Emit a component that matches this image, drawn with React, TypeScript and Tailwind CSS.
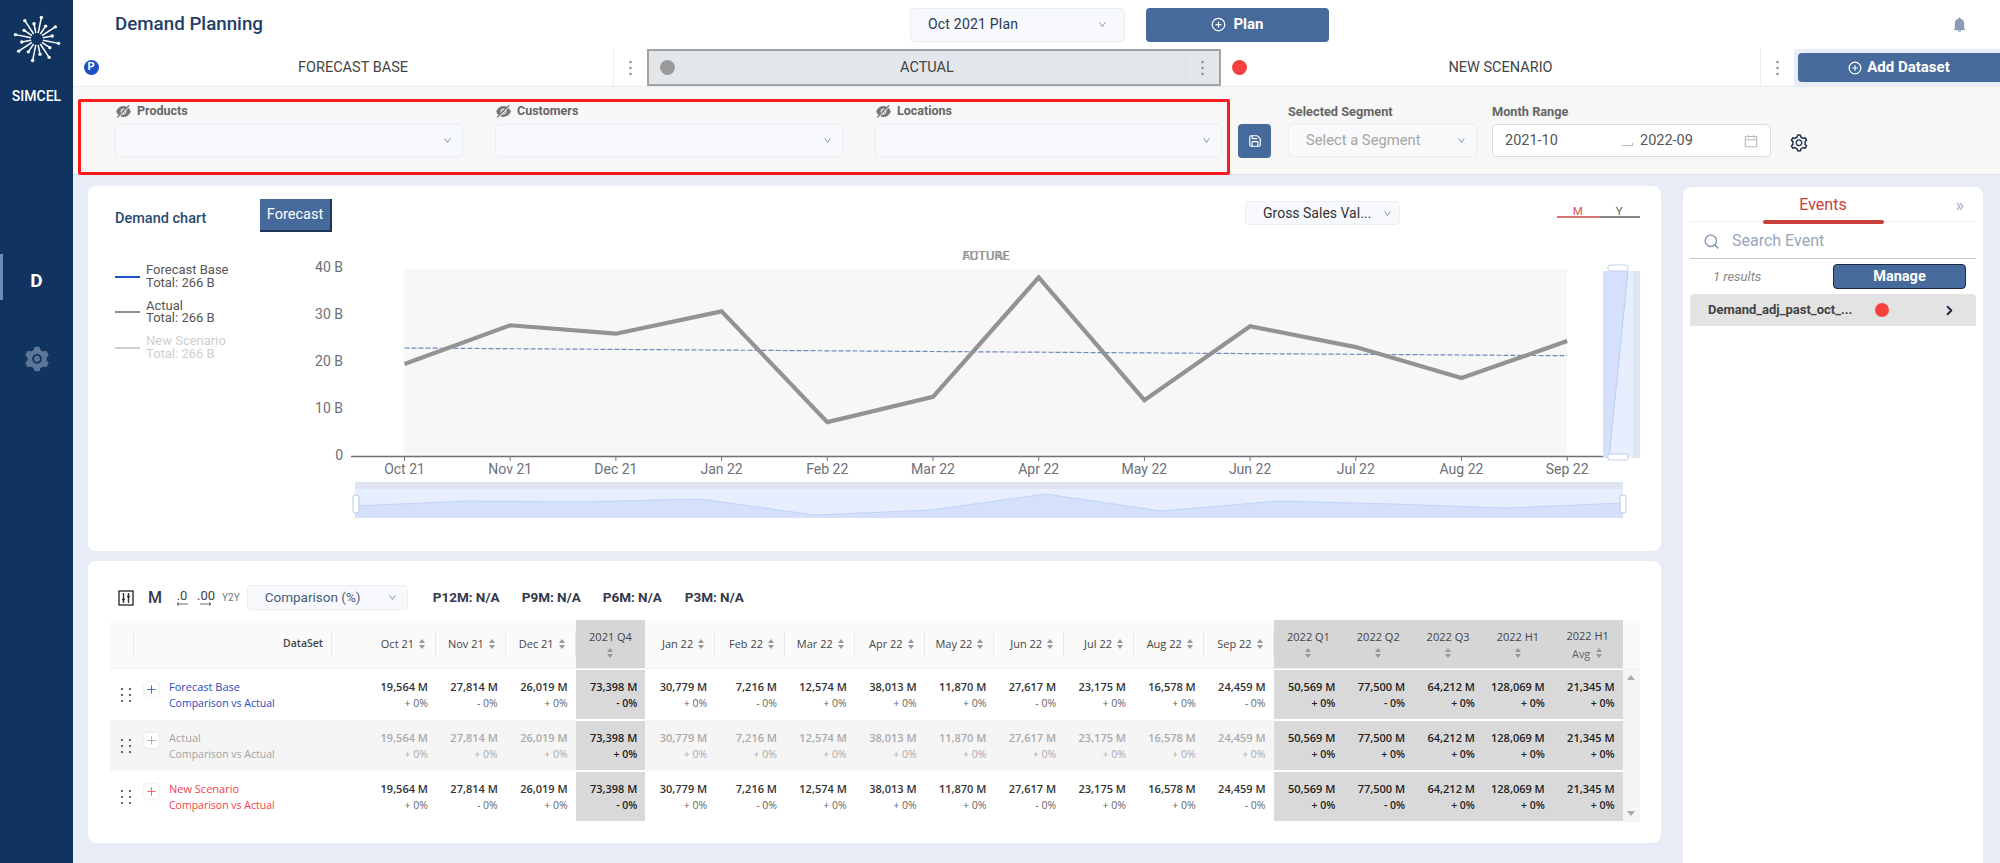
import { AiFillBell, AiFillEyeInvisible, AiOutlineCalendar, AiOutlineDown, AiOutlineSetting, AiFillSetting } from "react-icons/ai"
import { CirclePlus, Save, Search, ChevronRight, Plus } from "lucide-react"

const SANS = "font-['Roboto',_'Liberation_Sans',_sans-serif]"
const TABLE = "font-['Open_Sans',_'Liberation_Sans',_sans-serif]"

const values = [19564, 27814, 26019, 73398, 30779, 7216, 12574, 38013, 11870, 27617, 23175, 16578, 24459, 50569, 77500, 64212, 128069, 21345]
const heads = ["Oct 21", "Nov 21", "Dec 21", "2021 Q4", "Jan 22", "Feb 22", "Mar 22", "Apr 22", "May 22", "Jun 22", "Jul 22", "Aug 22", "Sep 22", "2022 Q1", "2022 Q2", "2022 Q3", "2022 H1", "2022 H1"]
const signs = "+-+-+-+++-++-+-+++"
const shaded = (i: number) => i === 3 || i >= 13

const monthly = [19.564, 27.814, 26.019, 30.779, 7.216, 12.574, 38.013, 11.87, 27.617, 23.175, 16.578, 24.459]
const months = ["Oct 21", "Nov 21", "Dec 21", "Jan 22", "Feb 22", "Mar 22", "Apr 22", "May 22", "Jun 22", "Jul 22", "Aug 22", "Sep 22"]
const xAt = (i: number) => 404.5 + i * 105.7
const yAt = (v: number) => 456 - v * 4.7

const Logo = () => {
  const rays = Array.from({ length: 16 }, (_, i) => {
    const a = (i * Math.PI) / 8 + 0.2
    const r = i % 2 ? 15.5 : 22
    return { x1: Math.cos(a) * 6, y1: Math.sin(a) * 6, x2: Math.cos(a) * r, y2: Math.sin(a) * r }
  })
  return (
    <svg width="50" height="50" viewBox="-25 -25 50 50">
      {rays.map((r, i) => (
        <g key={i}>
          <line x1={r.x1} y1={r.y1} x2={r.x2} y2={r.y2} stroke="white" strokeWidth="1.5" />
          <circle cx={r.x2} cy={r.y2} r="1.7" fill="white" />
        </g>
      ))}
    </svg>
  )
}

const Sort = ({ className = "" }: { className?: string }) => (
  <svg width="8" height="12" viewBox="0 0 8 12" className={className}>
    <path d="M4 1 7 5H1z" fill="#999" />
    <path d="M4 11 1 7h6z" fill="#999" />
  </svg>
)

const Dots = ({ className = "" }: { className?: string }) => (
  <svg width="3" height="16" viewBox="0 0 3 16" className={className}>
    <circle cx="1.5" cy="2" r="1.3" fill="#8392b5" />
    <circle cx="1.5" cy="8" r="1.3" fill="#8392b5" />
    <circle cx="1.5" cy="14" r="1.3" fill="#8392b5" />
  </svg>
)

const Grip = () => (
  <svg width="12" height="16" viewBox="0 0 12 16">
    {[2, 8, 14].map((y) => (
      <g key={y}>
        <circle cx="2" cy={y} r="1.1" fill="#444" />
        <circle cx="10" cy={y} r="1.1" fill="#444" />
      </g>
    ))}
  </svg>
)

const Decimal = ({ label, dir }: { label: string; dir: "left" | "right" }) => (
  <span className="flex flex-col items-center text-[13px] leading-[13px] text-[#444]">
    {label}
    <svg width="14" height="4" viewBox="0 0 14 4" fill="none" stroke="#444" strokeWidth="0.8">
      {dir === "left" ? <path d="M13 2H2M4 .5 2 2l2 1.5" /> : <path d="M1 2h11M10 .5 12 2l-2 1.5" />}
    </svg>
  </span>
)

const Tab = ({ label, dot, menuW, active }: { label: string; dot: React.ReactNode; menuW: string; active?: boolean }) => (
  <div className={`flex items-center ${menuW} ${active ? "bg-[#e3e6eb] border-2 border-[#a3a3a3] border-l-[#a3a3a3]" : ""}`}>
    <div className="w-[36px] flex justify-center shrink-0">{dot}</div>
    <div className="flex-1 text-center text-[14.5px] text-[#444] pr-[16px]">{label}</div>
    <div className={`w-[34px] h-full flex items-center justify-center border-l ${active ? "border-[#dcdfe5]" : "border-[#eceef2]"}`}>
      <Dots />
    </div>
  </div>
)

const Field = ({ label, w, className = "" }: { label: string; w: string; className?: string }) => (
  <div className={`${w} ${className}`}>
    <div className="flex items-center gap-[5px] h-[25px] text-[12.5px] font-bold text-[#666]">
      <AiFillEyeInvisible size={17} className="text-[#777]" />
      {label}
    </div>
    <div className="h-[33px] bg-[#f7f9fc] border border-[#e9edf5] rounded flex items-center justify-end pr-[10px]">
      <AiOutlineDown size={9} className="text-[#7c8aa8]" />
    </div>
  </div>
)

const legend = [
  { name: "Forecast Base", color: "bg-[#1f4fc4]", text: "text-[#555]" },
  { name: "Actual", color: "bg-[#8f8f8f]", text: "text-[#555]" },
  { name: "New Scenario", color: "bg-[#cfcfcf]", text: "text-[#cfcfcf]" },
]

const Chart = () => {
  const points = monthly.map((v, i) => `${xAt(i)},${yAt(v)}`).join(" ")
  const mini = "355,506 468,501 581,502 700,499 815,515 931,510 1046,494 1161,511 1278,501 1392,504 1507,508 1623,503"
  return (
    <svg width="1350" height="290" viewBox="300 240 1350 290" className="block shrink-0">
      <rect x="404.5" y="269" width="1162.5" height="187" fill="#f7f7f7" />
      <text x="986" y="260" textAnchor="middle" fontSize="13" fill="#888" fontFamily="Roboto">FUTURE</text>
      <text x="986" y="260" textAnchor="middle" fontSize="13" fill="#999" fontFamily="Roboto">ACTUAL</text>
      {["40 B", "30 B", "20 B", "10 B", "0"].map((t, i) => (
        <text key={t} x="343" y={272 + i * 47} textAnchor="end" fontSize="14" fill="#6e7079" fontFamily="Roboto">{t}</text>
      ))}
      <line x1="404.5" y1="348" x2="1567" y2="355.7" stroke="#7089bd" strokeWidth="1.2" strokeDasharray="5 2" />
      <polyline points={points} fill="none" stroke="#939393" strokeWidth="4.2" strokeLinejoin="miter" />
      <line x1="351" y1="456.5" x2="1603" y2="456.5" stroke="#6e7079" strokeWidth="1.5" />
      {months.map((m, i) => (
        <g key={m}>
          <line x1={xAt(i)} y1="456" x2={xAt(i)} y2="461" stroke="#6e7079" />
          <text x={xAt(i)} y="474" textAnchor="middle" fontSize="14" fill="#6e7079" fontFamily="Roboto">{m}</text>
        </g>
      ))}
      <rect x="1603" y="271" width="37" height="187" fill="#e7eefd" />
      <rect x="1633" y="271" width="7" height="187" fill="#dfe4f1" />
      <polygon points="1603,271 1628,271 1609,458 1603,458" fill="#d5e0fb" />
      <line x1="1628" y1="271" x2="1609" y2="458" stroke="#bccdf5" />
      <rect x="1608" y="265" width="20" height="6" rx="2" fill="white" stroke="#c3cfe8" />
      <rect x="1608" y="454" width="20" height="6" rx="2" fill="white" stroke="#c3cfe8" />
      <rect x="355" y="482" width="1268" height="36" fill="#e7eefd" />
      <rect x="355" y="482" width="1268" height="7" fill="#dfe4f1" />
      <polygon points={`${mini} 1623,518 355,518`} fill="#d5e0fb" />
      <polyline points={mini} fill="none" stroke="#c2d2fa" />
      <rect x="353" y="495" width="6" height="18" rx="2" fill="white" stroke="#b8c6e8" />
      <rect x="1620" y="495" width="6" height="18" rx="2" fill="white" stroke="#b8c6e8" />
    </svg>
  )
}

const rows = [
  { name: "Forecast Base", color: "text-[#2a4bc0]", cell: "text-[#333]", sub: "text-[#666]", bg: "bg-white", signs },
  { name: "Actual", color: "text-[#a3a3a3]", cell: "text-[#aaa]", sub: "text-[#aaa]", bg: "bg-[#f5f5f5]", signs: "+".repeat(18) },
  { name: "New Scenario", color: "text-[#f5414a]", cell: "text-[#333]", sub: "text-[#666]", bg: "bg-white", signs },
]

const COLS = "grid grid-cols-[24px_198px_104px_repeat(17,69.8px)_17px]"

const Table = () => (
  <div className={`ml-[22px] w-[1530px] ${TABLE}`}>
    <div className={`${COLS} h-[49px] bg-[#fafafa] text-[11px] text-[#444] border-b border-[#f0f0f0]`}>
      <div className="flex items-center justify-end"><span className="w-px h-[26px] bg-[#eaeaea]" /></div>
      <div className="flex items-center justify-end text-[10.5px] font-semibold pr-[8px] border-r border-[#eaeaea] my-[11px]">DataSet</div>
      {heads.map((h, i) => (
        shaded(i) ? (
          <div key={i} className="bg-[#d6d6d6] flex flex-col items-center justify-center gap-[3px] leading-[15px]">
            <div className="text-[11px]">{h}</div>
            <div className="flex items-center gap-[5px]">
              {i === 17 && <span className="text-[#666]">Avg</span>}
              <Sort />
            </div>
          </div>
        ) : (
          <div key={i} className="flex items-center justify-end gap-[4px] pr-[9px] border-r border-[#eaeaea] my-[11px]">
            {h}
            <Sort />
          </div>
        )
      ))}
      <div />
    </div>
    {rows.map((r) => (
      <div key={r.name} className={`${COLS} h-[51px] ${r.bg}`}>
        <div className="flex items-center justify-center pl-[8px]"><Grip /></div>
        <div className="flex pt-[13px] pl-[10px] gap-[10px]">
          <div className="w-[15px] h-[15px] bg-white shadow-[0_0_3px_#ddd] rounded-sm flex items-center justify-center">
            <Plus size={13} strokeWidth={1.5} className={r.color} />
          </div>
          <div className={`${r.color} text-[11px] leading-[16px] mt-[-3px]`}>
            <div>{r.name}</div>
            <div className="text-[10.5px]">Comparison vs Actual</div>
          </div>
        </div>
        {values.map((v, i) => (
          <div key={i} className={`flex flex-col items-end justify-center pr-[8px] text-[11px] leading-[16px] ${shaded(i) ? "bg-[#d9d9d9] text-[#222] border-y border-white" : r.cell}`}>
            <div className="font-semibold">{v.toLocaleString("en-US")} M</div>
            <div className={`text-[10.5px] ${shaded(i) ? "font-semibold" : r.sub}`}>{r.signs[i]} 0%</div>
          </div>
        ))}
        <div className="bg-[#f5f5f5] flex flex-col items-center justify-between py-[6px]">
          {r.name === "Forecast Base" && <span className="w-0 h-0 border-x-[4px] border-x-transparent border-b-[5px] border-b-[#aaa]" />}
          {r.name === "New Scenario" && <span className="mt-auto w-0 h-0 border-x-[4px] border-x-transparent border-t-[5px] border-t-[#aaa]" />}
        </div>
      </div>
    ))}
  </div>
)

export default function App() {
  return (
    <div className={`flex w-[2000px] h-[863px] overflow-hidden bg-[#e8ecf6] ${SANS}`}>
      <aside className="w-[73px] shrink-0 bg-[#10335f] flex flex-col items-center pt-[14px]">
        <Logo />
        <div className="mt-[24px] text-white text-[14px] font-medium leading-[16px]">SIMCEL</div>
        <div className="mt-[150px] w-full flex items-center justify-center relative h-[46px] pt-[9px]">
          <span className="absolute left-0 top-0 bottom-0 w-[3px] bg-[#6f8ab3]" />
          <span className="text-white text-[19px] font-bold">D</span>
        </div>
        <AiFillSetting size={28} className="mt-[45px] text-[#5d7698]" />
      </aside>

      <main className="flex-1 min-w-0 flex flex-col">
        <div className="h-[49px] bg-white flex items-center pl-[42px] pr-[32px]">
          <div className="w-[795px] text-[18.75px] font-medium text-[#1f3f68]">Demand Planning</div>
          <div className="w-[215px] h-[34px] bg-[#f7f9fc] border border-[#e9edf5] rounded flex items-center justify-between px-[17px] text-[14px] text-[#2b3650] tracking-[0.2px]">
            Oct 2021 Plan
            <AiOutlineDown size={9} className="text-[#7c8aa8]" />
          </div>
          <button className="ml-[21px] w-[183px] h-[34px] bg-[#476a9c] rounded text-white text-[15px] font-bold flex items-center justify-center gap-[7px]">
            <CirclePlus size={15} />
            Plan
          </button>
          <AiFillBell size={17} className="ml-auto text-[#8d9bb5]" />
        </div>

        <div className="h-[38px] flex bg-white border-b border-[#e8ecf4]">
          <Tab label="FORECAST BASE" menuW="w-[574px]" dot={<span className="w-[15px] h-[15px] rounded-full bg-[#1f4fc4] text-white text-[11px] font-bold flex items-center justify-center">P</span>} />
          <Tab label="ACTUAL" menuW="w-[574px]" active dot={<span className="w-[15px] h-[15px] rounded-full bg-[#9a9a9a]" />} />
          <Tab label="NEW SCENARIO" menuW="w-[573px]" dot={<span className="w-[15px] h-[15px] rounded-full bg-[#f5413f]" />} />
          <div className="flex-1 bg-[#e9edf6] pl-[4px] pt-[4px]">
            <button className="w-full h-[29px] bg-[#476a9c] rounded-l text-white text-[15px] font-bold flex items-center justify-center gap-[5px]">
              <CirclePlus size={14} />
              Add Dataset
            </button>
          </div>
        </div>

        <div className="h-[88px] bg-[#f7f7f7] border-b border-[#e0e3e8] flex items-start pl-[5px]">
          <div className="mt-[12px] w-[1152px] h-[76px] border-[3px] border-[#f81c1c] rounded-[2px] flex pl-[34px] gap-[32px]">
            <Field label="Products" w="w-[348px] mt-[-3px]" />
            <Field label="Customers" w="w-[348px] mt-[-3px]" />
            <Field label="Locations" w="w-[347px] mt-[-3px]" />
          </div>
          <div className="ml-[8px] mt-[37px] w-[33px] h-[34px] bg-[#476a9c] rounded flex items-center justify-center text-white">
            <Save size={14} />
          </div>
          <div className="ml-[17px] w-[189px]">
            <div className="mt-[12px] h-[25px] flex items-center text-[12.75px] font-bold text-[#666]">Selected Segment</div>
            <div className="h-[33px] bg-[#f9fafc] border border-[#e9edf5] rounded flex items-center justify-between pl-[17px] pr-[10px] text-[14.75px] text-[#a5a5a5]">
              Select a Segment
              <AiOutlineDown size={9} className="text-[#7c8aa8]" />
            </div>
          </div>
          <div className="ml-[15px] w-[279px]">
            <div className="mt-[12px] h-[25px] flex items-center text-[12.75px] font-bold text-[#666]">Month Range</div>
            <div className="h-[33px] bg-white border border-[#dcdcdc] rounded-sm flex items-center pl-[12px] pr-[11px] text-[14.5px] text-[#555]">
              <span className="w-[117px]">2021-10</span>
              <span className="w-[11px] h-[3px] border-b border-r border-[#bbb] mt-[8px]" />
              <span className="ml-[7px]">2022-09</span>
              <AiOutlineCalendar size={16} className="ml-auto text-[#bbb]" />
            </div>
          </div>
          <AiOutlineSetting size={20} className="ml-[18px] mt-[46px] text-[#1c2a48]" />
        </div>

        <div className="flex-1 flex items-start pt-[11px] pl-[15px] pr-[17px]">
          <div className="w-[1573px]">
            <section className="h-[365px] bg-white rounded-lg pt-[13px] pl-[27px]">
              <div className="flex items-start h-[41px]">
                <div className="w-[145px] mt-[9px] text-[14.5px] font-medium text-[#2a4a72]">Demand chart</div>
                <button className="w-[72px] h-[33px] bg-[#476a9c] border-r-2 border-b-2 border-[#1d3557] text-white text-[14.5px]">Forecast</button>
                <div className="ml-auto mt-[2px] w-[155px] h-[24px] bg-[#f7f9fc] border border-[#e9edf5] rounded flex items-center justify-between pl-[17px] pr-[7px] text-[14px] text-[#333]">
                  Gross Sales Val...
                  <AiOutlineDown size={9} className="text-[#7c8aa8]" />
                </div>
                <div className="ml-[157px] mr-[21px] mt-[7px] w-[83px] flex text-[11.5px]">
                  <div className="flex-1 text-center text-[#d9534f] border-b-2 border-[#d9736f] leading-[10px]">M</div>
                  <div className="flex-1 text-center text-[#666] border-b-2 border-[#888] leading-[10px]">Y</div>
                </div>
              </div>
              <div className="flex">
                <div className="w-[185px] pt-[24px] flex flex-col gap-[10.5px]">
                  {legend.map((l) => (
                    <div key={l.name} className="flex items-center gap-[6px]">
                      <span className={`w-[25px] h-[2px] ${l.color}`} />
                      <div className={`text-[13px] leading-[12.5px] ${l.text}`}>
                        <div>{l.name}</div>
                        <div>Total: 266 B</div>
                      </div>
                    </div>
                  ))}
                </div>
                <Chart />
              </div>
            </section>

            <section className="mt-[10px] h-[282px] bg-white rounded-lg pt-[24px]">
              <div className="flex items-center h-[25px] pl-[30px] text-[#333a4d]">
                <svg width="16" height="16" viewBox="0 0 16 16" fill="none" stroke="#333" strokeWidth="1.4">
                  <rect x="1" y="1" width="14" height="14" />
                  <path d="M5.5 3v10M10.5 3v10M4 9.5h3M9 6.5h3" />
                </svg>
                <span className="ml-[14px] text-[16px] font-medium">M</span>
                <span className="ml-[13px]"><Decimal label=".0" dir="left" /></span>
                <span className="ml-[8px]"><Decimal label=".00" dir="right" /></span>
                <span className="ml-[7px] text-[10px] text-[#777]">Y2Y</span>
                <div className="ml-[7px] w-[161px] h-[25px] bg-[#f7f9fc] border border-[#e9edf5] rounded flex items-center justify-between pl-[17px] pr-[10px] text-[13.5px] text-[#4a5a78]">
                  Comparison (%)
                  <AiOutlineDown size={9} className="text-[#7c8aa8]" />
                </div>
                <span className="ml-[25px] w-[89px] text-[13.5px] font-bold">P12M: N/A</span>
                <span className="w-[81px] text-[13.5px] font-bold">P9M: N/A</span>
                <span className="w-[82px] text-[13.5px] font-bold">P6M: N/A</span>
                <span className="text-[13.5px] font-bold">P3M: N/A</span>
              </div>
              <div className="mt-[10px]">
                <Table />
              </div>
            </section>
          </div>

          <aside className="ml-[22px] mt-[1px] w-[300px] h-[676px] bg-white rounded-t-lg px-[7px] shrink-0">
            <div className="relative h-[35px] border-b border-[#eceef2] flex items-center justify-center pr-[20px] pt-[1px] text-[16px] text-[#c9403b]">
              Events
              <span className="absolute left-[73px] bottom-[-3px] w-[121px] h-[4px] rounded bg-[#c9403b]" />
              <span className="absolute right-[12px] text-[#a8b4cc] text-[18px]">»</span>
            </div>
            <div className="h-[37px] border-b border-[#c9c9c9] flex items-center pl-[13px] pt-[2px] gap-[12px] text-[16px] text-[#99a6bd]">
              <Search size={17} className="text-[#8796b2]" />
              Search Event
            </div>
            <div className="flex items-center h-[35px] pl-[23px] pr-[10px]">
              <span className="text-[13px] italic text-[#888]">1 results</span>
              <button className="ml-auto w-[133px] h-[25px] bg-[#476a9c] border border-[#1b2a3e] rounded text-white text-[14.5px] font-bold">Manage</button>
            </div>
            <div className="h-[32px] bg-[#e3e3e3] rounded-t-sm flex items-center pl-[18px] text-[13px] font-bold text-[#444]">
              <span className="w-[167px]">Demand_adj_past_oct_...</span>
              <span className="w-[14px] h-[14px] rounded-full bg-[#f5413f]" />
              <ChevronRight size={15} strokeWidth={3} className="ml-[53px] text-[#1c2a48]" />
            </div>
          </aside>
        </div>
      </main>
    </div>
  )
}
